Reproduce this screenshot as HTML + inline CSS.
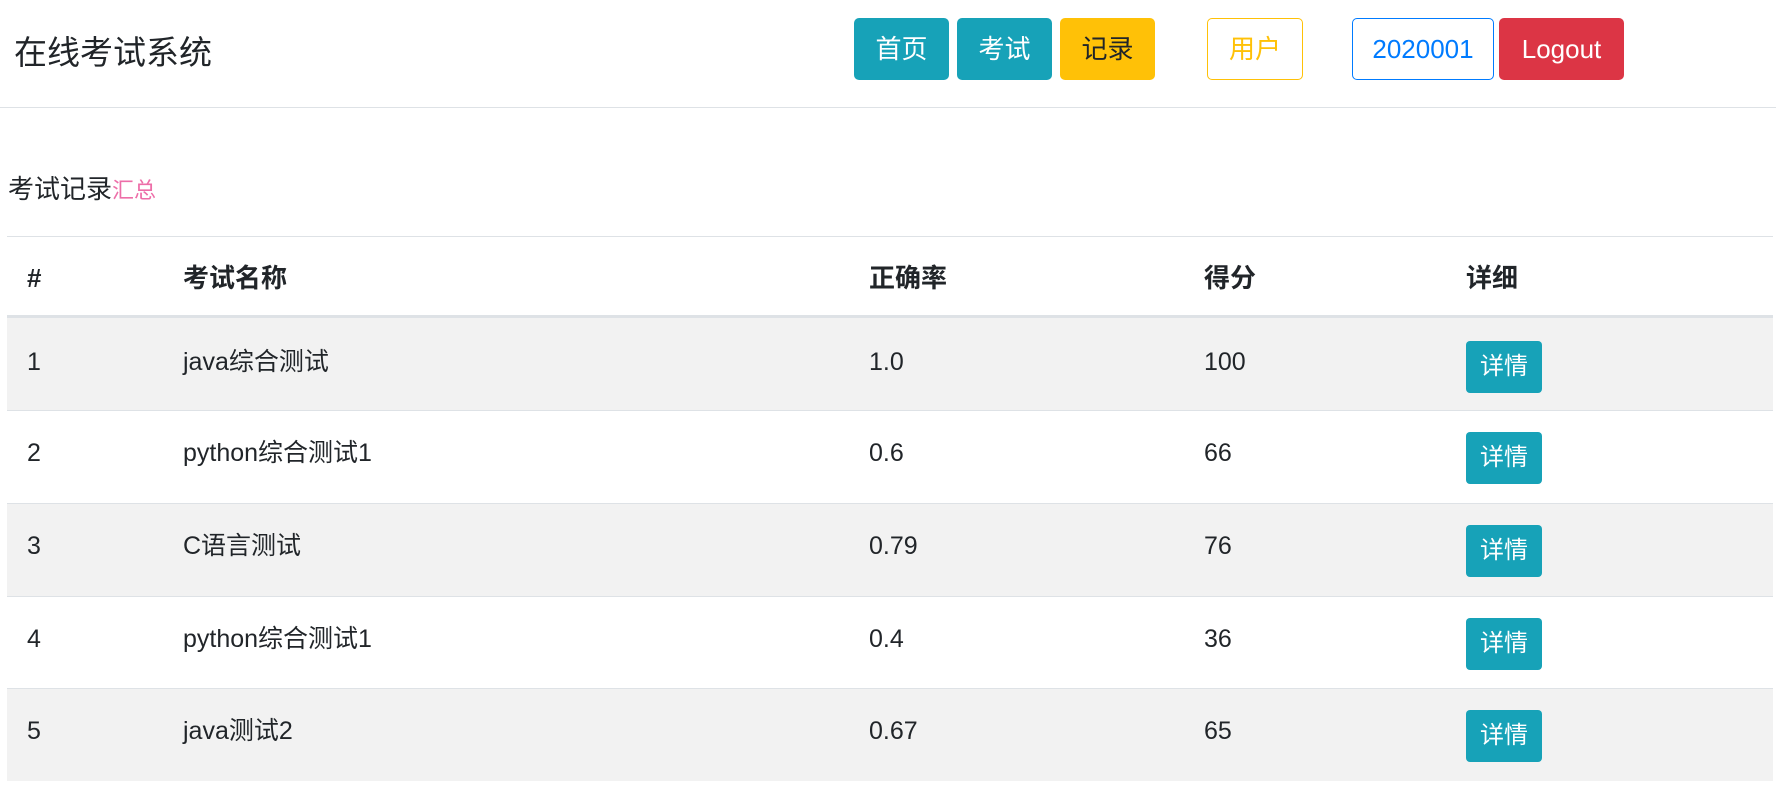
<!DOCTYPE html>
<html><head><meta charset="utf-8"><style>
*{box-sizing:border-box;margin:0;padding:0}
body{width:1776px;height:786px;overflow:hidden;background:#fff;font-family:"Liberation Sans","Noto Sans CJK SC",sans-serif;color:#212529}
.hdr{position:absolute;left:0;top:0;width:1776px;height:108px;border-bottom:1px solid #dee2e6}
.title{position:absolute;left:14px;top:33px;font-size:33px;line-height:40px;color:#212529}
.b{position:absolute;top:18px;height:62px;border-radius:5px;font-size:26px;line-height:60px;text-align:center;border:1px solid transparent}
.info{background:#17a2b8;color:#fff}
.warn{background:#ffc107;color:#212529}
.ow{border-color:#ffc107;color:#ffc107}
.op{border-color:#007bff;color:#007bff}
.dan{background:#dc3545;color:#fff}
.cap{position:absolute;left:8px;top:173px;font-size:26px;line-height:32px}
.cap span{color:#e83e8c;opacity:.75;font-size:22px}
.line{position:absolute;left:7px;width:1766px;top:236px;border-top:1px solid #dee2e6}
.th{position:absolute;top:261px;font-size:26px;font-weight:bold;line-height:34px}
.row{position:absolute;left:7px;width:1766px;height:93px;border-top:1px solid #dee2e6}
.row.s{background:#f2f2f2}
.c{position:absolute;top:25px;font-size:25px;line-height:34px}
.d{position:absolute;left:1459px;top:21px;width:76px;height:52px;background:#17a2b8;color:#fff;border-radius:4px;font-size:24px;line-height:52px;text-align:center}
</style></head><body>
<div class="hdr">
<div class="title">在线考试系统</div>
<div class="b info" style="left:854px;width:95px">首页</div>
<div class="b info" style="left:957px;width:95px">考试</div>
<div class="b warn" style="left:1060px;width:95px">记录</div>
<div class="b ow" style="left:1207px;width:96px">用户</div>
<div class="b op" style="left:1352px;width:142px">2020001</div>
<div class="b dan" style="left:1499px;width:125px">Logout</div>
</div>
<div class="cap">考试记录<span>汇总</span></div>
<div class="line"></div>
<div class="th" style="left:27px">#</div>
<div class="th" style="left:183px">考试名称</div>
<div class="th" style="left:869px">正确率</div>
<div class="th" style="left:1204px">得分</div>
<div class="th" style="left:1466px">详细</div>
<div class="row s" style="top:315px;border-top:3px solid #dee2e6;height:95px"><div class="c" style="left:20px;top:27px">1</div><div class="c" style="left:176px;top:27px">java综合测试</div><div class="c" style="left:862px;top:27px">1.0</div><div class="c" style="left:1197px;top:27px">100</div><div class="d" style="top:23px">详情</div></div>
<div class="row" style="top:410px"><div class="c" style="left:20px">2</div><div class="c" style="left:176px">python综合测试1</div><div class="c" style="left:862px">0.6</div><div class="c" style="left:1197px">66</div><div class="d">详情</div></div>
<div class="row s" style="top:503px"><div class="c" style="left:20px">3</div><div class="c" style="left:176px">C语言测试</div><div class="c" style="left:862px">0.79</div><div class="c" style="left:1197px">76</div><div class="d">详情</div></div>
<div class="row" style="top:596px"><div class="c" style="left:20px">4</div><div class="c" style="left:176px">python综合测试1</div><div class="c" style="left:862px">0.4</div><div class="c" style="left:1197px">36</div><div class="d">详情</div></div>
<div class="row s" style="top:688px"><div class="c" style="left:20px">5</div><div class="c" style="left:176px">java测试2</div><div class="c" style="left:862px">0.67</div><div class="c" style="left:1197px">65</div><div class="d">详情</div></div>
</body></html>
